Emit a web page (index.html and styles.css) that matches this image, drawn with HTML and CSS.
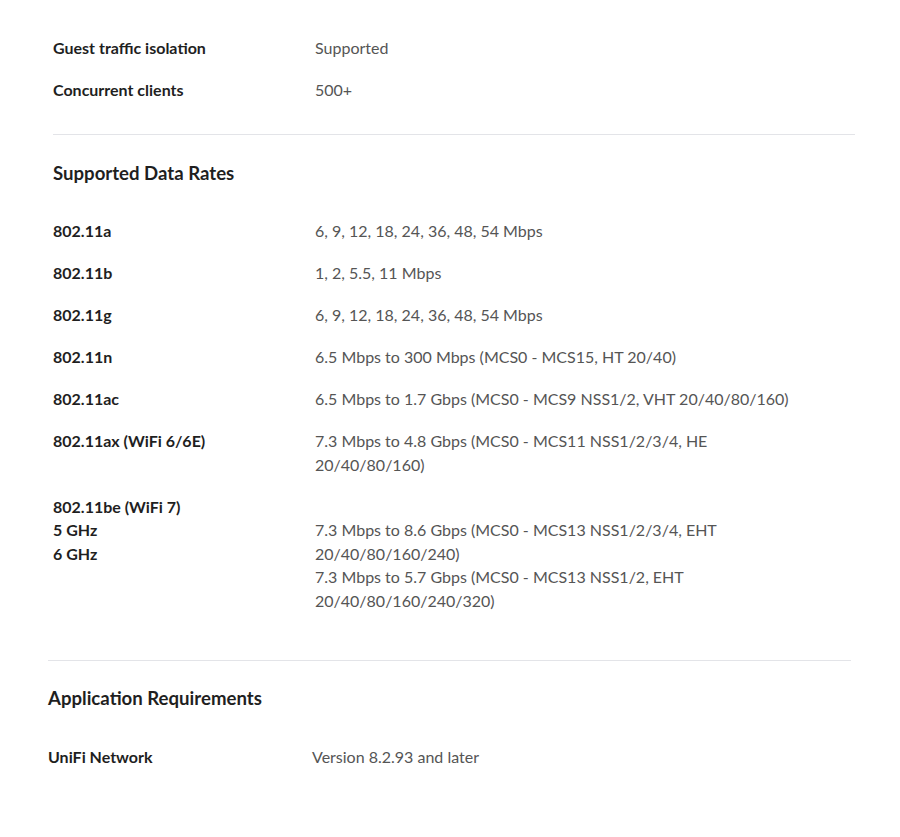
FILE: index.html
```html
<!DOCTYPE html>
<html>
<head>
<meta charset="utf-8">
<link rel="stylesheet" href="styles.css">
</head>
<body>
<div class="page">
  <section class="group top">
    <div class="row"><div class="label">Guest traffic isolation</div><div class="value">Supported</div></div>
    <div class="row"><div class="label">Concurrent clients</div><div class="value">500+</div></div>
  </section>
  <section class="group rates">
    <h2 class="heading">Supported Data Rates</h2>
    <div class="rows">
      <div class="row"><div class="label">802.11a</div><div class="value">6, 9, 12, 18, 24, 36, 48, 54 Mbps</div></div>
      <div class="row"><div class="label">802.11b</div><div class="value">1, 2, 5.5, 11 Mbps</div></div>
      <div class="row"><div class="label">802.11g</div><div class="value">6, 9, 12, 18, 24, 36, 48, 54 Mbps</div></div>
      <div class="row"><div class="label">802.11n</div><div class="value">6.5 Mbps to 300 Mbps (MCS0 - MCS15, HT 20/40)</div></div>
      <div class="row"><div class="label">802.11ac</div><div class="value">6.5 Mbps to 1.7 Gbps (MCS0 - MCS9 NSS1/2, VHT 20/40/80/160)</div></div>
      <div class="row"><div class="label">802.11ax (WiFi 6/6E)</div><div class="value">7.3 Mbps to 4.8 Gbps (MCS0 - MCS11 NSS1/2/3/4, HE<br>20/40/80/160)</div></div>
      <div class="row"><div class="label">802.11be (WiFi 7)<br>5 GHz<br>6 GHz</div><div class="value"><br>7.3 Mbps to 8.6 Gbps (MCS0 - MCS13 NSS1/2/3/4, EHT<br>20/40/80/160/240)<br>7.3 Mbps to 5.7 Gbps (MCS0 - MCS13 NSS1/2, EHT<br>20/40/80/160/240/320)</div></div>
    </div>
  </section>
  <section class="group last">
    <h2 class="heading">Application Requirements</h2>
    <div class="rows">
      <div class="row"><div class="label">UniFi Network</div><div class="value">Version 8.2.93 and later</div></div>
    </div>
  </section>
</div>
</body>
</html>
```
FILE: styles.css
```css
html, body {
  margin: 0;
  padding: 0;
  background: #ffffff;
}
body {
  font-family: Lato, "Noto Sans", "Liberation Sans", sans-serif;
  color: #1f1f1f;
}
.page {
  width: 802px;
  padding: 36px 0 0 53px;
}
.group {
  display: flex;
  flex-direction: column;
  gap: 18.5px;
}
.top {
  padding-bottom: 32px;
  border-bottom: 1px solid #e3e4e8;
}
.rates {
  padding-top: 25px;
  padding-bottom: 48px;
}
.last {
  padding-top: 24px;
  margin-left: -5px;
  margin-right: 4px;
  border-top: 1px solid #e3e4e8;
}
.heading {
  margin: 0 0 15px 0;
  font-size: 18.6px;
  line-height: 26px;
  font-weight: 700;
  color: #1f1f1f;
}
.rows {
  display: flex;
  flex-direction: column;
  gap: 18.5px;
}
.row {
  display: grid;
  grid-template-columns: 262px 1fr;
  font-size: 16px;
  line-height: 23.5px;
}
.last .row {
  grid-template-columns: 264px 1fr;
}
.label {
  font-weight: 700;
  color: #1f1f1f;
}
.value {
  color: #555555;
}
```
